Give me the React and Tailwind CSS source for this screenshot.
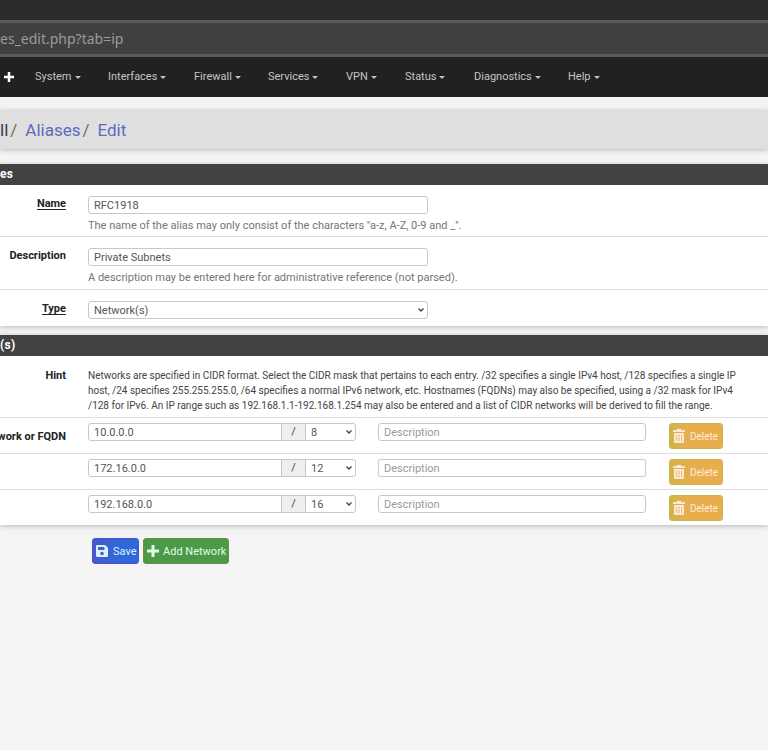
import React from "react";

const menus = [
  ["System", "w-[73px]"],
  ["Interfaces", "w-[86px]"],
  ["Firewall", "w-[74px]"],
  ["Services", "w-[78px]"],
  ["VPN", "w-[59px]"],
  ["Status", "w-[69px]"],
  ["Diagnostics", "w-[94px]"],
  ["Help", "w-[60px]"],
];

const networks = [
  { address: "10.0.0.0", mask: "8", label: "work or FQDN" },
  { address: "172.16.0.0", mask: "12", label: "" },
  { address: "192.168.0.0", mask: "16", label: "" },
];

const field = "h-[18px] border border-[#c8c8c8] bg-white px-[5px] text-[11px] text-[#555] outline-none";

function Select({ className, children, ...props }) {
  return (
    <div className={"relative " + className}>
      <select {...props} className={field + " w-full appearance-none rounded-[inherit]"}>
        {children}
      </select>
      <svg viewBox="0 0 6 4" className="pointer-events-none absolute top-[7px] right-1 h-1 w-1.5" fill="none" stroke="#444" strokeWidth="1.4">
        <path d="M.5 .5 3 3 5.500 .5" />
      </svg>
    </div>
  );
}

function PlusIcon({ className }) {
  return (
    <svg viewBox="0 0 12 12" className={className} fill="currentColor">
      <path d="M4.500 0h3v4.500H12v3H7.500V12h-3V7.500H0v-3h4.500z" />
    </svg>
  );
}

function TrashIcon() {
  return (
    <svg viewBox="0 0 12 14" className="h-3.5 w-3 shrink-0" fill="currentColor">
      <path d="M4 0h4l.7 1.300H12V3H0V1.300h3.300z" />
      <path fillRule="evenodd" d="M1 4h10v9a1 1 0 0 1-1 1H2a1 1 0 0 1-1-1zM3 5.500v7h.7v-7zM5.600 5.500v7h.8v-7zM8.300 5.500v7H9v-7z" />
    </svg>
  );
}

function SaveIcon() {
  return (
    <svg viewBox="0 0 12 12" className="size-3 shrink-0" fill="currentColor">
      <path fillRule="evenodd" d="M1.300 0H9l3 3v7.700a1.300 1.300 0 0 1-1.300 1.300H1.300A1.300 1.300 0 0 1 0 10.700V1.300A1.300 1.300 0 0 1 1.300 0zM2 2v3h6.500V2zM6 6.700a1.800 1.800 0 1 0 0 3.600 1.800 1.800 0 0 0 0-3.600z" />
    </svg>
  );
}

function Row({ label, htmlFor, underline, children, className = "" }) {
  return (
    <div className={"flex border-b border-[#dedede] last:border-b-0 " + className}>
      <div className="flex w-[66px] shrink-0 justify-end pt-px font-bold whitespace-nowrap text-[#222]">
        {label && (
          <label htmlFor={htmlFor} className={"h-[13px] leading-[13px] " + (underline ? "border-b border-[#222]" : "")}>
            {label}
          </label>
        )}
      </div>
      <div className="ml-[22px] min-w-0 flex-1">{children}</div>
    </div>
  );
}

function Panel({ title, children, className = "" }) {
  return (
    <section className={"bg-white shadow-[0_1px_5px_rgba(0,0,0,0.25)] " + className}>
      <h2 className="h-[21px] bg-[#424242] text-[12px] leading-[20px] font-bold tracking-wide text-white">{title}</h2>
      {children}
    </section>
  );
}

export default function App() {
  return (
    <div className="min-h-screen overflow-hidden bg-[#f4f4f4] font-['Roboto',sans-serif] text-[11px] leading-[15px] text-[#444]">
      <div className="h-5 bg-[#2b2b2b]" />
      <div className="h-[37px] border-y-[3px] border-[#5a5a5a] bg-[#404040]">
        <input
          aria-label="Address"
          defaultValue="es_edit.php?tab=ip"
          className="block h-[31px] w-full bg-transparent font-['Noto_Sans',sans-serif] text-[14px] text-[#9b9b9b] outline-none"
        />
      </div>
      <nav className="flex h-10 items-center bg-[#212121] pb-px text-[#c4c4c4]">
        <div className="w-[35px] shrink-0 pl-1">
          <PlusIcon className="size-2.5 text-white" />
        </div>
        {menus.map(([name, width]) => (
          <button key={name} type="button" className={"flex shrink-0 items-center gap-[3px] " + width}>
            {name}
            <span className="mt-0.5 border-x-[3px] border-t-[3px] border-x-transparent border-t-current" />
          </button>
        ))}
      </nav>

      <header className="mt-[13px] flex h-[39px] items-center bg-[#dfdfdf] pt-0.5 text-[17px] shadow-[0_1px_5px_rgba(0,0,0,0.25)]">
        <span className="text-[#333a5c]">ll</span>
        <span className="ml-0.5 text-[#8a6650]">/</span>
        <a href="#aliases" className="ml-2 text-[#5c6bc0]">Aliases</a>
        <span className="ml-0.5 text-[#8a6650]">/</span>
        <a href="#edit" className="ml-2 text-[#5c6bc0]">Edit</a>
      </header>

      <main>
        <Panel title="es" className="mt-[15px]">
          <Row label="Name" htmlFor="name" underline className="h-[52px] pt-[11px]">
            <input id="name" defaultValue="RFC1918" className={field + " block w-[340px] rounded-[3px]"} />
            <p className="mt-1 whitespace-nowrap text-[#757575]">The name of the alias may only consist of the characters "a-z, A-Z, 0-9 and _".</p>
          </Row>
          <Row label="Description" htmlFor="description" className="h-[53px] pt-[11px]">
            <input id="description" defaultValue="Private Subnets" className={field + " block w-[340px] rounded-[3px]"} />
            <p className="mt-1 whitespace-nowrap text-[#757575]">A description may be entered here for administrative reference (not parsed).</p>
          </Row>
          <Row label="Type" htmlFor="type" underline className="h-9 pt-[11px]">
            <Select id="type" className="w-[340px] rounded-[3px]">
              <option>Network(s)</option>
            </Select>
          </Row>
        </Panel>

        <Panel title="(s)" className="mt-[9px]">
          <Row label="Hint" className="h-[62px] pt-3">
            <p className="text-[10px] leading-[15px] whitespace-nowrap">
              Networks are specified in CIDR format. Select the CIDR mask that pertains to each entry. /32 specifies a single IPv4 host, /128 specifies a single IP
              <br />
              host, /24 specifies 255.255.255.0, /64 specifies a normal IPv6 network, etc. Hostnames (FQDNs) may also be specified, using a /32 mask for IPv4
              <br />
              /128 for IPv6. An IP range such as 192.168.1.1-192.168.1.254 may also be entered and a list of CIDR networks will be derived to fill the range.
            </p>
          </Row>
          {networks.map(({ address, mask, label }, i) => (
            <div key={address} className="flex h-9 items-start border-b border-[#dedede] pt-[5px] last:h-[35px] last:border-b-0">
              <div className="mt-1.5 flex w-[66px] shrink-0 justify-end font-bold whitespace-nowrap text-[#222]">
                <label htmlFor={"address" + i}>{label}</label>
              </div>
              <div className="ml-[22px] flex w-[268px] shrink-0">
                <input id={"address" + i} aria-label="Network" defaultValue={address} className={field + " w-[194px] rounded-l-[3px]"} />
                <span className="h-[18px] w-[23px] border-y border-[#c8c8c8] bg-[#eee] text-center leading-4">/</span>
                <Select aria-label="Mask" className="w-[51px] rounded-r-[3px]">
                  <option>{mask}</option>
                </Select>
              </div>
              <input aria-label="Description" placeholder="Description" className={field + " ml-[22px] w-[268px] shrink-0 rounded-[3px] placeholder:text-[#999]"} />
              <button type="button" className="ml-[23px] flex h-[26px] w-[54px] shrink-0 items-center gap-[5px] rounded-[3px] border border-[#c9b44a] bg-linear-to-r from-[#d2b348] to-[#e8ae4e] to-40% pl-[3px] text-[10px] text-[#ffe9dc]">
                <TrashIcon />
                Delete
              </button>
            </div>
          ))}
        </Panel>

        <div className="mt-[13px] ml-[92px] flex gap-1">
          <button type="button" className="flex h-[26px] w-[47px] items-center gap-[5px] rounded-[3px] border border-[#4a50c8] bg-linear-to-r from-[#4658cc] to-[#2f68d8] to-60% pl-[3px] text-[#d8f4ff]">
            <SaveIcon />
            Save
          </button>
          <button type="button" className="flex h-[26px] w-[86px] items-center gap-1 rounded-[3px] border border-[#6a9048] bg-[#4c9a48] pl-[3px] whitespace-nowrap text-[#dcffea]">
            <PlusIcon className="size-3 shrink-0" />
            Add Network
          </button>
        </div>
      </main>
    </div>
  );
}
